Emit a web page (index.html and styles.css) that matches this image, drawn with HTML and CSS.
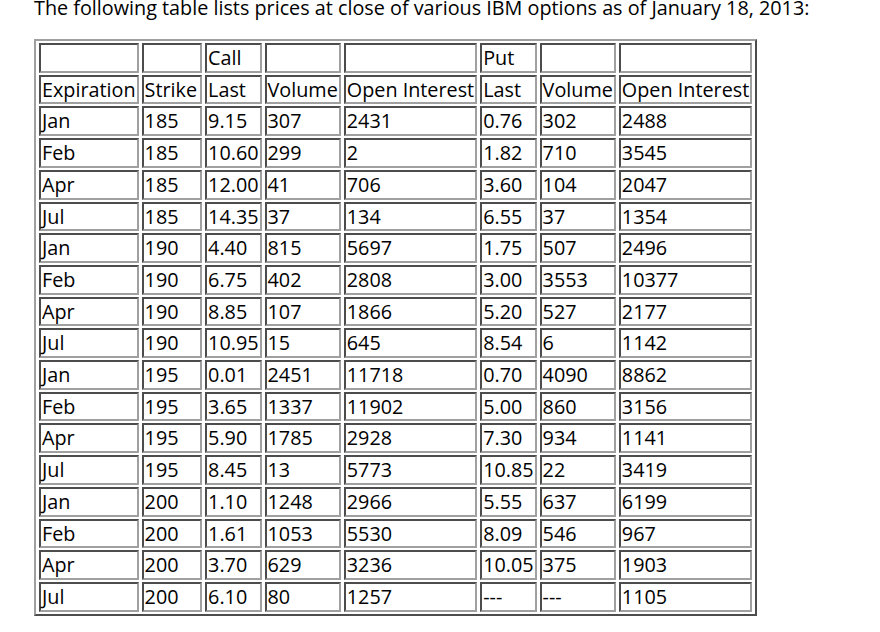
FILE: index.html
```html
<!DOCTYPE html>
<html>
<head>
<meta charset="utf-8">
<link rel="stylesheet" href="styles.css">
</head>
<body>
<p class="intro">The following table lists prices at close of various IBM options as of January 18, 2013:</p>
<table class="opts">
<tr><td></td><td></td><td>Call</td><td></td><td></td><td>Put</td><td></td><td></td></tr>
<tr><td>Expiration</td><td>Strike</td><td>Last</td><td>Volume</td><td>Open Interest</td><td>Last</td><td>Volume</td><td>Open Interest</td></tr>
<tr><td>Jan</td><td>185</td><td>9.15</td><td>307</td><td>2431</td><td>0.76</td><td>302</td><td>2488</td></tr>
<tr><td>Feb</td><td>185</td><td>10.60</td><td>299</td><td>2</td><td>1.82</td><td>710</td><td>3545</td></tr>
<tr><td>Apr</td><td>185</td><td>12.00</td><td>41</td><td>706</td><td>3.60</td><td>104</td><td>2047</td></tr>
<tr><td>Jul</td><td>185</td><td>14.35</td><td>37</td><td>134</td><td>6.55</td><td>37</td><td>1354</td></tr>
<tr><td>Jan</td><td>190</td><td>4.40</td><td>815</td><td>5697</td><td>1.75</td><td>507</td><td>2496</td></tr>
<tr><td>Feb</td><td>190</td><td>6.75</td><td>402</td><td>2808</td><td>3.00</td><td>3553</td><td>10377</td></tr>
<tr><td>Apr</td><td>190</td><td>8.85</td><td>107</td><td>1866</td><td>5.20</td><td>527</td><td>2177</td></tr>
<tr><td>Jul</td><td>190</td><td>10.95</td><td>15</td><td>645</td><td>8.54</td><td>6</td><td>1142</td></tr>
<tr><td>Jan</td><td>195</td><td>0.01</td><td>2451</td><td>11718</td><td>0.70</td><td>4090</td><td>8862</td></tr>
<tr><td>Feb</td><td>195</td><td>3.65</td><td>1337</td><td>11902</td><td>5.00</td><td>860</td><td>3156</td></tr>
<tr><td>Apr</td><td>195</td><td>5.90</td><td>1785</td><td>2928</td><td>7.30</td><td>934</td><td>1141</td></tr>
<tr><td>Jul</td><td>195</td><td>8.45</td><td>13</td><td>5773</td><td>10.85</td><td>22</td><td>3419</td></tr>
<tr><td>Jan</td><td>200</td><td>1.10</td><td>1248</td><td>2966</td><td>5.55</td><td>637</td><td>6199</td></tr>
<tr><td>Feb</td><td>200</td><td>1.61</td><td>1053</td><td>5530</td><td>8.09</td><td>546</td><td>967</td></tr>
<tr><td>Apr</td><td>200</td><td>3.70</td><td>629</td><td>3236</td><td>10.05</td><td>375</td><td>1903</td></tr>
<tr><td>Jul</td><td>200</td><td>6.10</td><td>80</td><td>1257</td><td>---</td><td>---</td><td>1105</td></tr>
</table>
</body>
</html>
```
FILE: styles.css
```css
html, body {
  margin: 0;
  padding: 0;
  background: #fff;
}
body {
  padding-left: 34px;
  font-family: "Open Sans", sans-serif;
  font-size: 19.8px;
  color: #000;
}
.intro {
  margin: -5px 0 18px 0;
  line-height: 26px;
}
.opts {
  border: 2px outset #a0a0a0;
  border-spacing: 3px 2px;
  font-size: 19.8px;
  line-height: 25.7px;
}
.opts td {
  border: 2px inset #a0a0a0;
  padding: 0 1px 0 1px;
  white-space: nowrap;
  height: 25.7px;
}
.opts td:nth-child(2) {
  padding-right: 3px;
}
```
